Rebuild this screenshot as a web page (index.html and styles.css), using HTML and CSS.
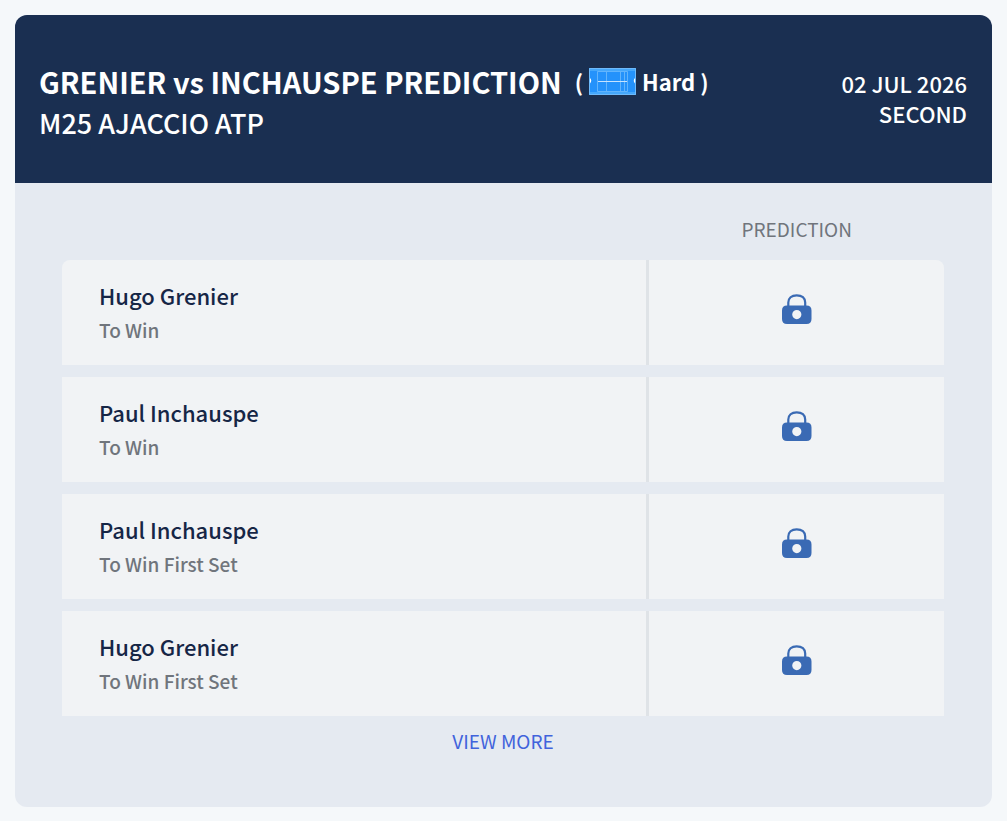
FILE: index.html
```html
<!DOCTYPE html>
<html lang="en">
<head>
<meta charset="utf-8">
<meta name="viewport" content="width=device-width, initial-scale=1">
<title>Grenier vs Inchauspe Prediction</title>
<link rel="stylesheet" href="styles.css">
</head>
<body>
<svg class="sprite" aria-hidden="true">
  <symbol id="lock" viewBox="0 0 30 31">
    <path d="M6.300 13V8.500C6.300 4 9.500 1.300 14.700 1.300S23.200 4 23.200 8.500V13" fill="none" stroke="#3a6ab4" stroke-width="2.200"/>
    <path fill-rule="evenodd" fill="#3a6ab4" d="M5 11.500H24.500Q29.500 11.500 29.500 16.500V25Q29.500 30 24.500 30H5Q0 30 0 25V16.500Q0 11.500 5 11.500ZM14.800 16A4.600 4.600 0 1 0 14.800 25.200A4.600 4.600 0 1 0 14.800 16Z"/>
  </symbol>
</svg>
<main class="card">
  <header class="card-header">
    <div class="match">
      <h1 class="title">
        <span>GRENIER vs INCHAUSPE PREDICTION</span>
        <span class="surface">
          <span>(</span>
          <svg class="court" viewBox="0 0 47 27" aria-hidden="true">
            <rect width="47" height="27" fill="#45a8fc"/>
            <rect x="1" y="3" width="45" height="21" fill="#2492fb"/>
            <g fill="none" stroke="#6dbafc">
              <path d="M.5 .5H46.500V26.500H.5Z"/>
              <path d="M8.500 3.500H38.500V23.500H8.500ZM17.500 4V23M31.500 4V23M35.500 4V23" opacity=".85"/>
            </g>
            <path d="M9 13.500H38" stroke="#c5e3ff"/>
            <path d="M1 10Q3.500 12.500 1 15.500ZM46 10Q43.500 12.500 46 15.500Z" fill="#fff"/>
          </svg>
          <span>Hard )</span>
        </span>
      </h1>
      <p class="event">M25 AJACCIO ATP</p>
    </div>
    <p class="date">02 JUL 2026<br>SECOND</p>
  </header>
  <section class="card-body">
    <table class="predictions">
      <thead><tr><td></td><th scope="col">PREDICTION</th></tr></thead>
      <tbody>
        <tr><td class="pick"><p class="player">Hugo Grenier</p><p class="market">To Win</p></td><td class="result"><svg class="lock" role="img" aria-label="Locked"><use href="#lock"/></svg></td></tr>
        <tr><td class="pick"><p class="player">Paul Inchauspe</p><p class="market">To Win</p></td><td class="result"><svg class="lock" role="img" aria-label="Locked"><use href="#lock"/></svg></td></tr>
        <tr><td class="pick"><p class="player">Paul Inchauspe</p><p class="market">To Win First Set</p></td><td class="result"><svg class="lock" role="img" aria-label="Locked"><use href="#lock"/></svg></td></tr>
        <tr><td class="pick"><p class="player">Hugo Grenier</p><p class="market">To Win First Set</p></td><td class="result"><svg class="lock" role="img" aria-label="Locked"><use href="#lock"/></svg></td></tr>
      </tbody>
    </table>
    <a class="more" href="#">VIEW MORE</a>
  </section>
</main>
</body>
</html>
```
FILE: styles.css
```css
* { box-sizing: border-box; }
body {
  margin: 0;
  padding: 15px;
  background: #f5f8fa;
  font-family: "Noto Sans CJK SC", "Noto Sans", sans-serif;
  color: #162646;
}
h1, p { margin: 0; }
.sprite { display: none; }
.card {
  border-radius: 12px;
  overflow: hidden;
  background: #e5eaf1;
}
.card-header {
  display: flex;
  justify-content: space-between;
  align-items: center;
  padding: 45px 25px 39px 24px;
  background: #1a2f51;
  color: #fff;
}
.title {
  display: flex;
  flex-wrap: wrap;
  align-items: center;
  column-gap: 13px;
  font-size: 29px;
  line-height: 42px;
  font-weight: 700;
}
.surface { display: flex; align-items: center; gap: 6px; font-size: 22px; }
.court { width: 47px; height: 27px; }
.event { font-size: 27px; line-height: 42px; font-weight: 500; }
.date { padding-bottom: 8px; font-size: 22px; line-height: 30px; font-weight: 500; text-align: right; }
.card-body {
  display: flex;
  flex-direction: column;
  align-items: center;
  padding: 18px 48px 53px 47px;
}
.predictions {
  width: 100%;
  table-layout: fixed;
  border-collapse: separate;
  border-spacing: 0 12px;
}
.predictions th, .predictions td { padding: 0; }
.predictions th {
  width: 33.4%;
  height: 35px;
  color: #70757c;
  font-size: 19px;
  line-height: 32px;
  font-weight: 400;
  vertical-align: top;
}
.predictions .pick, .predictions .result { height: 105px; background: #f1f3f5; }
.predictions .pick { padding: 0 37px; border-right: 3px solid #dfe3e7; }
.predictions .result { padding-bottom: 6px; text-align: center; }
.predictions tbody tr:first-child .pick { border-top-left-radius: 8px; }
.predictions tbody tr:first-child .result { border-top-right-radius: 8px; }
.player { font-size: 22px; line-height: 34px; font-weight: 500; }
.market { font-size: 19px; line-height: 36px; font-weight: 500; color: #70757c; }
.lock { width: 30px; height: 31px; vertical-align: middle; }
.more {
  color: #4163dc;
  font-size: 19px;
  line-height: 26px;
  text-decoration: none;
}
```
